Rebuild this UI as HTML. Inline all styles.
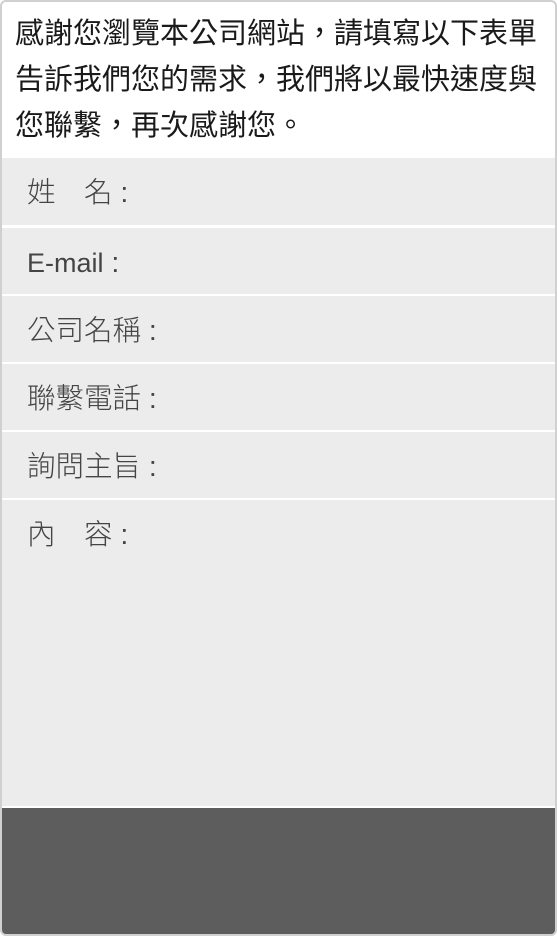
<!DOCTYPE html>
<html><head><meta charset="utf-8"><style>
*{margin:0;padding:0;box-sizing:border-box}
body{width:557px;height:936px;background:#fff;font-family:"Liberation Sans","Noto Sans CJK TC",sans-serif;overflow:hidden;position:relative}
.frame{position:absolute;left:0;top:0;width:557px;height:936px;border:2px solid #d0d0d0;border-radius:6px;overflow:hidden;background:#fff}
.intro{position:absolute;left:13px;top:9px;white-space:nowrap;font-size:29px;line-height:46px;color:#1a1a1a;font-weight:400;letter-spacing:0}
.row{position:absolute;left:0;width:553px;background:#ececec;font-size:28.5px;color:#444;padding-left:25px;font-weight:300}
.row span{font-size:27px}
.dark{position:absolute;left:0;top:806px;width:553px;height:128px;background:#5d5d5d}
</style></head><body>
<div class="frame">
<div class="intro">感謝您瀏覽本公司網站，請填寫以下表單<br>告訴我們您的需求，我們將以最快速度與<br>您聯繫，再次感謝您。</div>
<div class="row" style="top:156px;height:67px;line-height:70px">姓　名 :</div>
<div class="row" style="top:226px;height:66px;line-height:70px"><span>E-mail</span> :</div>
<div class="row" style="top:294px;height:66px;line-height:70px">公司名稱 :</div>
<div class="row" style="top:362px;height:66px;line-height:70px">聯繫電話 :</div>
<div class="row" style="top:430px;height:66px;line-height:70px">詢問主旨 :</div>
<div class="row" style="top:498px;height:306px;line-height:70px">內　容 :</div>
<div class="dark"></div>
</div>
</body></html>
